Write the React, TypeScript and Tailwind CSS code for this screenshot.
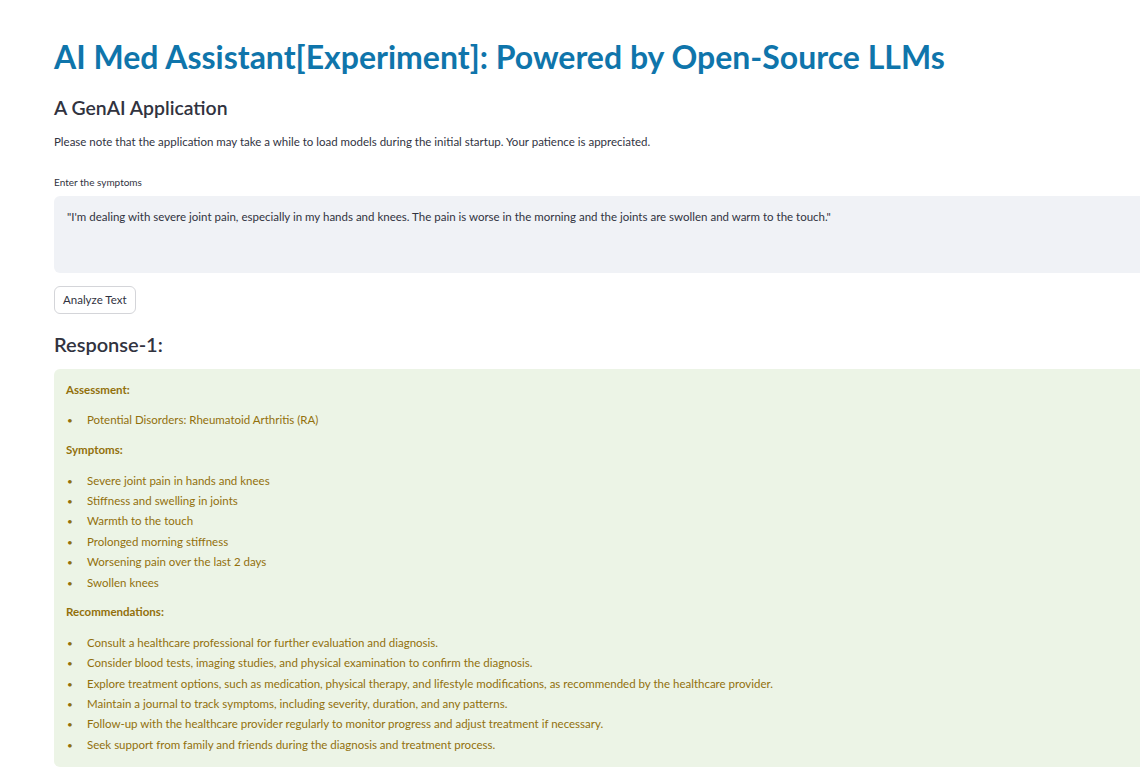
const symptoms = [
  'Severe joint pain in hands and knees',
  'Stiffness and swelling in joints',
  'Warmth to the touch',
  'Prolonged morning stiffness',
  'Worsening pain over the last 2 days',
  'Swollen knees',
];

const recommendations = [
  'Consult a healthcare professional for further evaluation and diagnosis.',
  'Consider blood tests, imaging studies, and physical examination to confirm the diagnosis.',
  'Explore treatment options, such as medication, physical therapy, and lifestyle modifications, as recommended by the healthcare provider.',
  'Maintain a journal to track symptoms, including severity, duration, and any patterns.',
  'Follow-up with the healthcare provider regularly to monitor progress and adjust treatment if necessary.',
  'Seek support from family and friends during the diagnosis and treatment process.',
];

function Bullets({ items }: { items: string[] }) {
  return (
    <ul className="flex flex-col">
      {items.map((item) => (
        <li key={item} className="flex h-[20.4px] items-center">
          <span className="w-[21px] pl-[1px] text-[10px]">•</span>
          <span>{item}</span>
        </li>
      ))}
    </ul>
  );
}

export default function App() {
  return (
    <div className="h-[778px] w-full overflow-hidden bg-white font-['Lato',sans-serif] text-[#31333f]">
      <div className="w-[1200px] pl-[54px] pt-[35px]">
        <h1 className="text-[32px] font-bold leading-[44px] text-[#0f75ab]">
          AI Med Assistant[Experiment]: Powered by Open-Source LLMs
        </h1>
        <h3 className="mt-[14px] text-[19.4px] font-semibold leading-[30px]">A GenAI Application</h3>
        <p className="mt-[10px] text-[11.5px] leading-[18px]">
          Please note that the application may take a while to load models during the initial startup. Your patience is appreciated.
        </p>

        <label className="mt-[23px] block text-[10px] leading-[16px]">Enter the symptoms</label>
        <div className="mt-[6px] h-[77px] w-[1150px] rounded-md bg-[#f0f2f6] px-[13px] pt-[12px] text-[11.5px] leading-[18px]">
          "I'm dealing with severe joint pain, especially in my hands and knees. The pain is worse in the morning and the joints are swollen and warm to the touch."
        </div>

        <button className="mt-[13px] h-[28px] rounded-md border border-[#d4d5d9] bg-white px-[8px] text-[11.5px]">
          Analyze Text
        </button>

        <h3 className="mt-[15px] text-[20px] font-semibold leading-[30px]">Response-1:</h3>

        <div className="mt-[10px] w-[1150px] rounded-md bg-[#ecf4e6] px-[12px] pb-[12px] pt-[12px] text-[11.5px] leading-[18px] text-[#92700c]">
          <p className="font-bold">Assessment:</p>
          <div className="mt-[11px]">
            <Bullets items={['Potential Disorders: Rheumatoid Arthritis (RA)']} />
          </div>
          <p className="mt-[11px] font-bold">Symptoms:</p>
          <div className="mt-[11px]">
            <Bullets items={symptoms} />
          </div>
          <p className="mt-[10px] font-bold">Recommendations:</p>
          <div className="mt-[12px]">
            <Bullets items={recommendations} />
          </div>
        </div>
      </div>
    </div>
  );
}
